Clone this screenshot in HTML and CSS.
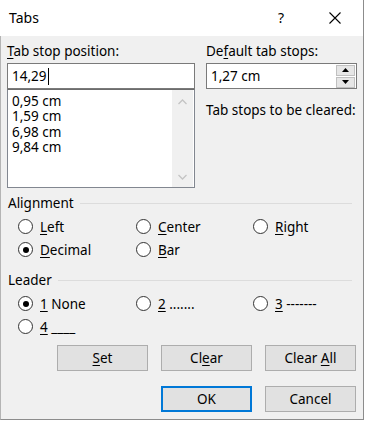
FILE: index.html
```html
<!DOCTYPE html>
<html>
<head>
<meta charset="utf-8">
<link rel="stylesheet" href="styles.css">
</head>
<body>
<div class="dialog">
  <div class="titlebar">
    <span class="title">Tabs</span>
    <span class="help">?</span>
    <span class="close"><svg width="12" height="12" viewBox="0 0 12 12"><path d="M0.5 0.5 L11.5 11.5 M11.5 0.5 L0.5 11.5" stroke="#000" stroke-width="1.1" fill="none"/></svg></span>
  </div>
  <div class="content">
    <div class="top">
      <div class="col-left">
        <div class="label"><u>T</u>ab stop position:</div>
        <div class="input"><span>14,29</span><span class="caret"></span></div>
        <div class="list">
          <div class="items">
            <div>0,95 cm</div>
            <div>1,59 cm</div>
            <div>6,98 cm</div>
            <div>9,84 cm</div>
          </div>
          <div class="scroll">
            <svg width="9" height="6" viewBox="0 0 9 6"><path d="M0.5 5 L4.5 1 L8.5 5" stroke="#c4c4c4" stroke-width="1.3" fill="none"/></svg>
            <svg width="9" height="6" viewBox="0 0 9 6"><path d="M0.5 1 L4.5 5 L8.5 1" stroke="#c4c4c4" stroke-width="1.3" fill="none"/></svg>
          </div>
        </div>
      </div>
      <div class="col-right">
        <div class="label">De<u>f</u>ault tab stops:</div>
        <div class="spin">
          <span class="spin-val">1,27 cm</span>
          <div class="spin-btns">
            <div class="spin-btn"><svg width="7" height="4" viewBox="0 0 7 4"><path d="M0 4 L3.5 0 L7 4 Z" fill="#000"/></svg></div>
            <div class="spin-btn"><svg width="7" height="4" viewBox="0 0 7 4"><path d="M0 0 L3.5 4 L7 0 Z" fill="#000"/></svg></div>
          </div>
        </div>
        <div class="cleared">Tab stops to be cleared:</div>
      </div>
    </div>

    <div class="group-head"><span>Alignment</span><span class="rule"></span></div>
    <div class="radios">
      <div class="radio"><span class="dot"></span><span><u>L</u>eft</span></div>
      <div class="radio"><span class="dot"></span><span><u>C</u>enter</span></div>
      <div class="radio"><span class="dot"></span><span><u>R</u>ight</span></div>
      <div class="radio"><span class="dot on"></span><span><u>D</u>ecimal</span></div>
      <div class="radio"><span class="dot"></span><span><u>B</u>ar</span></div>
    </div>

    <div class="group-head leader"><span>Leader</span><span class="rule"></span></div>
    <div class="radios">
      <div class="radio"><span class="dot on"></span><span><u>1</u> None</span></div>
      <div class="radio"><span class="dot"></span><span><u>2</u> .......</span></div>
      <div class="radio"><span class="dot"></span><span><u>3</u> -------</span></div>
      <div class="radio"><span class="dot"></span><span><u>4</u> ____</span></div>
    </div>

    <div class="btn-row first">
      <div class="btn"><span><u>S</u>et</span></div>
      <div class="btn"><span>Cl<u>e</u>ar</span></div>
      <div class="btn"><span>Clear <u>A</u>ll</span></div>
    </div>
    <div class="btn-row second">
      <div class="btn default"><span>OK</span></div>
      <div class="btn"><span>Cancel</span></div>
    </div>
  </div>
</div>
</body>
</html>
```

FILE: styles.css
```css
* { box-sizing: border-box; }
html, body { margin: 0; padding: 0; background: #fff; }
body {
  font-family: "Noto Sans", "Open Sans", sans-serif;
  font-size: 13.5px;
  color: #000;
}
u { text-decoration: underline; text-underline-offset: 2px; text-decoration-thickness: 1px; }

.dialog {
  width: 364px;
  height: 420px;
  background: #f0f0f0;
  border-left: 1px solid #b4b4b4;
  border-right: 1px solid #8c8c8c;
  border-bottom: 1px solid #8c8c8c;
  display: flex;
  flex-direction: column;
}

.titlebar {
  height: 36px;
  background: #fff;
  display: flex;
  align-items: center;
  padding-left: 9px;
  padding-bottom: 1px;
  margin-left: -1px;
}
.title { font-size: 14px; flex: 1; }
.help { font-size: 14px; width: 51px; }
.close { width: 34px; display: flex; }

.content { padding: 7px 6px 0 6px; }

.top { display: grid; grid-template-columns: 188px 151px; column-gap: 11px; }
.label { line-height: 16px; height: 16px; margin-bottom: 4px; white-space: nowrap; }

.input {
  height: 26px;
  border: 1px solid #7a7a7a;
  background: #fff;
  display: flex;
  align-items: center;
  padding-left: 4px;
}
.caret { width: 1px; height: 17px; background: #000; margin-left: 1px; }

.list {
  height: 99px;
  border: 1px solid #828790;
  border-top-color: #6d6d6d;
  background: #fff;
  display: flex;
}
.items { flex: 1; padding: 4px 0 0 4px; line-height: 15.4px; }
.scroll {
  width: 21px;
  background: #f0f0f0;
  margin: 0 1px 0 0;
  display: flex;
  flex-direction: column;
  justify-content: space-between;
  align-items: center;
  padding: 9px 0 7px 0;
}

.spin {
  height: 26px;
  border: 1px solid #7a7a7a;
  background: #fff;
  display: flex;
  align-items: center;
  padding-left: 4px;
}
.spin-val { flex: 1; }
.spin-btns { display: flex; flex-direction: column; gap: 1px; margin-right: 1px; }
.spin-btn {
  width: 19px; height: 11px;
  background: #e6e6e6;
  border: 1px solid #c0c0c0;
  display: flex; align-items: center; justify-content: center;
}
.cleared { margin-top: 13px; line-height: 16px; white-space: nowrap; }

.group-head {
  display: flex;
  align-items: center;
  height: 16px;
  line-height: 16px;
  margin-top: 7px;
  margin-left: 1px;
}
.group-head .rule { flex: 1; height: 1px; background: #dcdcdc; margin-left: 6px; margin-right: 5px; }
.group-head.leader { margin-top: 11px; }

.radios {
  display: grid;
  grid-template-columns: 118px 117px auto;
  grid-auto-rows: 23px;
  margin-left: 11px;
  margin-top: 4px;
}
.radio { display: flex; align-items: center; gap: 7px; white-space: nowrap; }
.dot {
  width: 15px; height: 15px;
  border-radius: 50%;
  border: 1px solid #333;
  background: #fff;
  position: relative;
  flex: none;
}
.dot.on::after {
  content: "";
  position: absolute;
  left: 3.5px; top: 3.5px;
  width: 6px; height: 6px;
  border-radius: 50%;
  background: #000;
}

.btn-row { display: flex; justify-content: flex-end; gap: 13px; padding-right: 1px; }
.btn-row.first { margin-top: 7px; }
.btn-row.second { margin-top: 15px; }
.btn {
  width: 91px; height: 26px;
  background: #e1e1e1;
  border: 1px solid #adadad;
  display: flex; align-items: center; justify-content: center;
  white-space: pre;
}
.btn.default { border: 2px solid #0078d7; }
```
